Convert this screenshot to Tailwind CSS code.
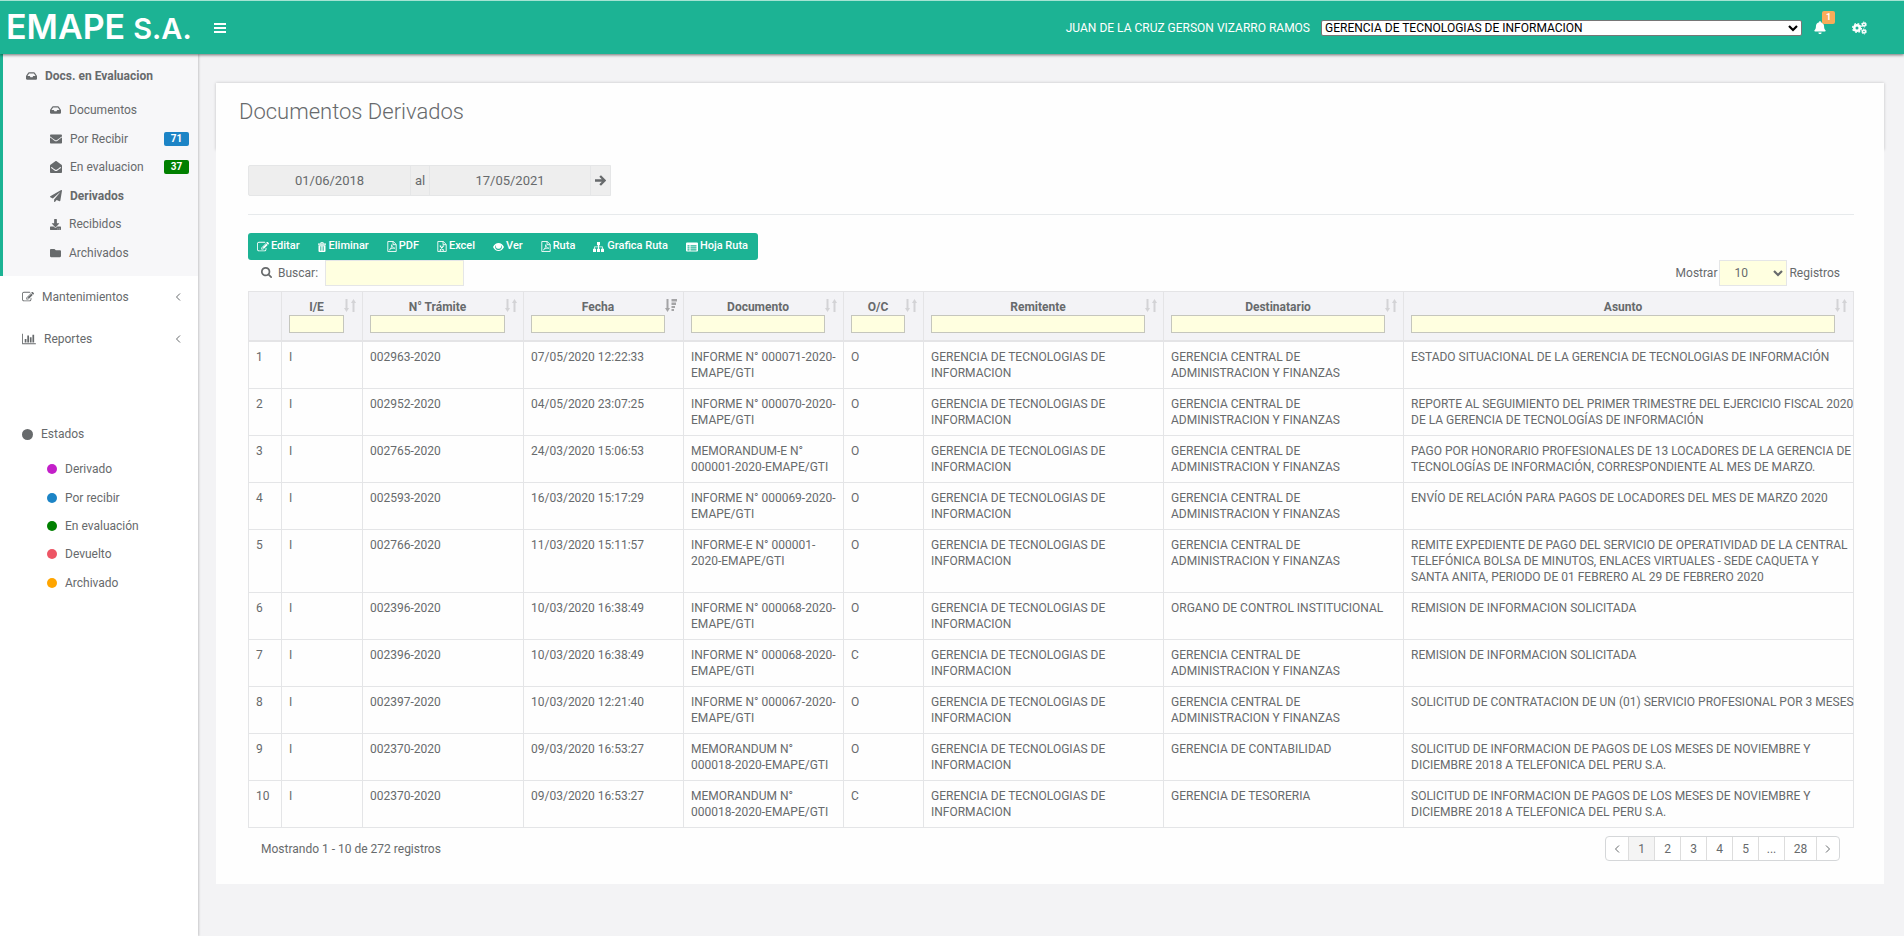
<!DOCTYPE html>
<html lang="es">
<head>
<meta charset="utf-8">
<title>EMAPE S.A. - Documentos Derivados</title>
<meta name="viewport" content="width=device-width, initial-scale=1">
<script src="https://cdn.jsdelivr.net/npm/@tailwindcss/browser@4"></script>
</head>
<body class="min-h-screen flex flex-col bg-[#f3f3f5] font-['Roboto','Liberation_Sans',sans-serif] text-xs text-[#676a6c]">

<svg class="hidden" aria-hidden="true">
  <symbol id="inbox" viewBox="0 0 576 512"><path d="M567.938 243.908L462.25 85.374A48.003 48.003 0 0 0 422.311 64H153.689a48 48 0 0 0-39.938 21.374L8.062 243.908A47.994 47.994 0 0 0 0 270.533V400c0 26.51 21.49 48 48 48h480c26.51 0 48-21.49 48-48V270.533a47.994 47.994 0 0 0-8.062-26.625zM162.252 128h251.497l85.333 128H376l-32 64H232l-32-64H76.918l85.334-128z"/></symbol>
  <symbol id="envelope" viewBox="0 0 512 512"><path d="M502.3 190.8c3.9-3.1 9.7-.2 9.7 4.7V400c0 26.5-21.5 48-48 48H48c-26.5 0-48-21.5-48-48V195.6c0-5 5.7-7.8 9.7-4.7 22.4 17.4 52.1 39.5 154.1 113.6 21.1 15.4 56.7 47.8 92.2 47.6 35.7.3 72-32.8 92.3-47.6 102-74.1 131.6-96.3 154-113.7zM256 320c23.2.4 56.6-29.2 73.4-41.4 132.7-96.3 142.8-104.7 173.4-128.7 5.8-4.5 9.2-11.5 9.2-18.9v-19c0-26.5-21.5-48-48-48H48c-26.5 0-48 21.5-48 48v19c0 7.4 3.4 14.3 9.2 18.9 30.6 23.9 40.7 32.4 173.4 128.7 16.8 12.2 50.2 41.8 73.4 41.4z"/></symbol>
  <symbol id="envelope-open" viewBox="0 0 512 512"><path fill-rule="evenodd" d="M512 464c0 26.5-21.5 48-48 48H48c-26.5 0-48-21.5-48-48V200.700a48 48 0 0 1 18.400-37.800c24.900-19.500 45.500-35.400 164.200-121.500C199.400 29.200 232.800-.3 256 0c23.200-.3 56.600 29.200 73.400 41.400 118.700 86.100 139.300 102 164.200 121.500A48 48 0 0 1 512 200.700V464zM446 252c-23 17-66 49-117 86-17 12-50 42-73 41-23 1-56-29-73-41-51-37-94-69-117-86l-26 38c23 17 73 54 123 90 20 15 57 48 93 48s72-33 93-48c50-36 100-73 123-90z"/></symbol>
  <symbol id="plane" viewBox="0 0 512 512"><path d="M476 3.200L12.500 270.600c-18.100 10.400-15.800 35.600 2.200 43.200L121 358.400l287.300-253.200c5.500-4.900 13.300 2.600 8.600 8.300L176 407v80.500c0 23.600 28.500 32.900 42.500 15.800L282 426l124.600 52.200c14.200 6 30.400-2.900 33-18.200l72-432C515 7.800 493.300-6.800 476 3.200z"/></symbol>
  <symbol id="download" viewBox="0 0 512 512"><path d="M216 0h80c13.300 0 24 10.700 24 24v168h87.700c17.800 0 26.700 21.500 14.100 34.100L269.700 378.300c-7.500 7.500-19.800 7.500-27.300 0L90.100 226.100c-12.600-12.600-3.700-34.100 14.100-34.100H192V24c0-13.300 10.700-24 24-24zm296 376v112c0 13.300-10.700 24-24 24H24c-13.300 0-24-10.700-24-24V376c0-13.300 10.700-24 24-24h146.700l49 49c20.100 20.100 52.500 20.100 72.600 0l49-49H488c13.300 0 24 10.700 24 24zm-124 88c0-11-9-20-20-20s-20 9-20 20 9 20 20 20 20-9 20-20zm64 0c0-11-9-20-20-20s-20 9-20 20 9 20 20 20 20-9 20-20z"/></symbol>
  <symbol id="folder" viewBox="0 0 512 512"><path d="M464 128H272l-64-64H48C21.490 64 0 85.490 0 112v288c0 26.510 21.490 48 48 48h416c26.510 0 48-21.490 48-48V176c0-26.510-21.490-48-48-48z"/></symbol>
  <symbol id="edit" viewBox="0 0 1792 1792"><path d="M888 1184l116-116-152-152-116 116v56h96v96h56zm440-720q-16-16-33 1l-350 350q-17 17-1 33t33-1l350-350q17-17 1-33zm80 594v190q0 119-84.500 203.500t-203.500 84.500h-832q-119 0-203.500-84.500t-84.500-203.500v-832q0-119 84.500-203.500t203.500-84.500h832q63 0 117 25 15 7 18 23 3 17-9 29l-49 49q-14 14-32 8-23-6-45-6h-832q-66 0-113 47t-47 113v832q0 66 47 113t113 47h832q66 0 113-47t47-113v-126q0-13 9-22l64-64q15-15 35-7t20 29zm-96-738l288 288-672 672h-288v-288zm444 132l-92 92-288-288 92-92q28-28 68-28t68 28l152 152q28 28 28 68t-28 68z"/></symbol>
  <symbol id="chart" viewBox="0 0 2048 1792"><path d="M640 896v512h-256v-512h256zm384-512v1024h-256v-1024h256zm1024 1152v128h-2048v-1536h128v1408h1920zm-640-896v768h-256v-768h256zm384-384v1152h-256v-1152h256z"/></symbol>
  <symbol id="search" viewBox="64 128 1664 1664"><path d="M1216 832q0-185-131.500-316.500t-316.500-131.500-316.500 131.500-131.500 316.500 131.500 316.500 316.500 131.500 316.500-131.500 131.500-316.500zm512 832q0 52-38 90t-90 38q-54 0-90-38l-343-342q-179 124-399 124-143 0-273.500-55.500t-225-150-150-225-55.500-273.500 55.500-273.500 150-225 225-150 273.500-55.500 273.500 55.500 225 150 150 225 55.500 273.500q0 220-124 399l343 343q37 37 37 90z"/></symbol>
  <symbol id="bell" viewBox="0 0 448 512"><path d="M224 512c35.320 0 63.970-28.650 63.970-64H160.030c0 35.350 28.650 64 63.970 64zm215.390-149.710c-19.320-20.760-55.470-51.990-55.470-154.290 0-77.700-54.480-139.900-127.940-155.160V32c0-17.670-14.320-32-31.980-32s-31.980 14.330-31.980 32v20.840C118.560 68.100 64.080 130.300 64.080 208c0 102.300-36.150 133.530-55.470 154.290-6 6.450-8.660 14.160-8.610 21.710.11 16.400 12.980 32 32.100 32h383.800c19.120 0 32-15.600 32.100-32 .05-7.550-2.610-15.270-8.610-21.710z"/></symbol>
  <symbol id="gears" viewBox="0 0 30 28"><g fill="none" stroke="currentColor"><circle cx="10" cy="14" r="5.500" stroke-width="5"/><circle cx="10" cy="14" r="8.800" stroke-width="2.600" stroke-dasharray="3.600 3.310"/><circle cx="24" cy="7" r="3" stroke-width="3"/><circle cx="24" cy="7" r="5" stroke-width="1.800" stroke-dasharray="2.600 2.636"/><circle cx="24" cy="21" r="3" stroke-width="3"/><circle cx="24" cy="21" r="5" stroke-width="1.800" stroke-dasharray="2.600 2.636"/></g></symbol>
  <symbol id="trash" viewBox="0 0 16 20"><path fill-rule="evenodd" d="M5 3V1.500Q5 0 6.500 0h3Q11 0 11 1.500V3h5v2.500H0V3zM6.500 1.500V3h3V1.500zM1 6.500h14V18q0 2-2 2H3q-2 0-2-2zM4 8.500v9h1.300v-9zm3.400 0v9h1.300v-9zm3.300 0v9H12v-9z"/></symbol>
  <symbol id="pdf" viewBox="0 0 18 21"><g fill="none" stroke="currentColor" stroke-width="1.700"><path d="M1 1h10.500L17 6.500V20H1zM11 1v6h6"/><path stroke-width="1.500" d="M4 17c3-2 5-6 4.500-10 0 4 2 6.500 6 6.800-4-.8-7.500.5-10.500 3.200z"/></g></symbol>
  <symbol id="excel" viewBox="0 0 18 21"><g fill="none" stroke="currentColor" stroke-width="1.700"><path d="M1 1h10.500L17 6.500V20H1zM11 1v6h6"/><path stroke-width="2" d="M5.500 9.500l6 8M11.500 9.500l-6 8M4.500 9.500h3M10 9.500h3M4.500 17.500h3M10 17.500h3"/></g></symbol>
  <symbol id="eye" viewBox="0 0 22 16"><path fill-rule="evenodd" d="M0 8Q4 0 11 0t11 8q-4 8-11 8T0 8zm6.500-4.500A5.800 5.800 0 0 0 11 13.800a5.800 5.800 0 0 0 4.500-10.300A5 5 0 0 1 11 11.500a5 5 0 0 1-4.500-8z"/></symbol>
  <symbol id="sitemap" viewBox="0 0 22 20"><path d="M8 0h6v6.500h-2V9h7.500v4.500H22V20h-6v-6.500h2v-3h-6v3h2V20H8v-6.500h2v-3H4v3h2V20H0v-6.500h2.500V9H10V6.500H8z"/></symbol>
  <symbol id="list" viewBox="0 0 24 20"><path fill-rule="evenodd" d="M2 1h20q2 0 2 2v14q0 2-2 2H2q-2 0-2-2V3q0-2 2-2zm1 5.500V9h4V6.500zm6 0V9h12V6.500zm-6 4V13h4v-2.500zm6 0V13h12v-2.500zm-6 4V17h4v-2.500zm6 0V17h12v-2.500z"/></symbol>
  <symbol id="sort" viewBox="0 0 12 13"><path d="M1.500 0h2v9H5l-2.500 4L0 9h1.500zM8.500 13h2V4H12L9.500 0 7 4h1.500z"/></symbol>
  <symbol id="sort-desc" viewBox="0 0 12 13"><path d="M1.500 0h2v9H5l-2.500 4L0 9h1.500zM6.500 0H12v2.500H6.500zM6.500 3.500H11V6H6.500zM6.500 7H10v2H6.500zM6.500 10H9v2H6.500z"/></symbol>
  <symbol id="arrow" viewBox="0 0 16 16"><path fill="none" stroke="currentColor" stroke-width="3.400" d="M0 8h14M7.500 1.500L14 8l-6.500 6.500"/></symbol>
  <symbol id="bars" viewBox="0 0 12 10"><path d="M0 0h12v2H0zM0 4h12v2H0zM0 8h12v2H0z"/></symbol>
  <symbol id="chev-down" viewBox="0 0 10 7"><path fill="none" stroke="currentColor" stroke-width="2.200" d="M1 1l4 4 4-4"/></symbol>
  <symbol id="left" viewBox="0 0 6 8"><path fill="none" stroke="currentColor" d="M5 .5L1.500 4 5 7.500"/></symbol>
  <symbol id="right" viewBox="0 0 6 8"><path fill="none" stroke="currentColor" d="M1 .5L4.500 4 1 7.500"/></symbol>
</svg>

<header class="relative z-10 flex h-[54px] items-center border-t border-[#a5e3d3] bg-[#1cb394] text-white shadow-[0_1px_3px_rgba(0,0,0,0.55)]">
  <a href="#" class="flex w-[198px] items-baseline gap-2 pl-1.5 font-['Inter',sans-serif] font-semibold leading-[44px]"><span class="text-[34px]">EMAPE</span><span class="text-[29px]">S.A.</span></a>
  <button type="button" aria-label="Menú" class="ml-4"><svg class="h-2.5 w-3 fill-current"><use href="#bars"/></svg></button>
  <div class="ml-auto flex items-center pr-[37px]">
    <label for="area">JUAN DE LA CRUZ GERSON VIZARRO RAMOS</label>
    <div class="relative ml-[11px] text-black">
      <select id="area" class="block h-4 w-[481px] appearance-none rounded-xs border border-[#767676] bg-white pl-[3px] text-xs leading-[14px]"><option>GERENCIA DE TECNOLOGIAS DE INFORMACION</option></select>
      <svg class="pointer-events-none absolute right-1 top-[5px] h-[7px] w-2.5"><use href="#chev-down"/></svg>
    </div>
    <button type="button" aria-label="Notificaciones" class="relative ml-3"><svg class="h-[13px] w-3 fill-current"><use href="#bell"/></svg><span class="absolute -top-2.5 left-2 h-[13px] w-[13px] rounded-xs bg-[#f8ac59] text-center text-[9px] font-bold leading-[13px]">1</span></button>
    <button type="button" aria-label="Configuración" class="ml-[26px]"><svg class="h-[14px] w-[15px] fill-current"><use href="#gears"/></svg></button>
  </div>
</header>

<div class="flex grow">
  <nav class="w-[198px] shrink-0 bg-white shadow-[1px_0_2px_rgba(0,0,0,0.18)]">
    <div class="h-[222px] border-l-[3px] border-[#1cb394] bg-[#f7f7f9] pt-3">
      <a href="#" class="flex h-5 items-center gap-2 pl-[23px] font-bold"><svg class="h-2.5 w-[11px] fill-current"><use href="#inbox"/></svg>Docs. en Evaluacion</a>
      <ul class="mt-2.5 grid h-[171px] grid-rows-6 pl-[47px] pr-[9px]">
        <li class="flex items-center"><a href="#" class="flex items-center gap-2"><svg class="h-2.5 w-[11px] fill-current"><use href="#inbox"/></svg>Documentos</a></li>
        <li class="flex items-center justify-between"><a href="#" class="flex items-center gap-2"><svg class="h-3 w-3 fill-current"><use href="#envelope"/></svg>Por Recibir</a><span class="h-[14px] w-[25px] rounded-xs bg-[#1c84c6] text-center text-[10px] font-bold leading-[14px] text-white">71</span></li>
        <li class="flex items-center justify-between"><a href="#" class="flex items-center gap-2"><svg class="h-3 w-3 fill-current"><use href="#envelope-open"/></svg>En evaluacion</a><span class="h-[14px] w-[25px] rounded-xs bg-[#008000] text-center text-[10px] font-bold leading-[14px] text-white">37</span></li>
        <li class="flex items-center"><a href="#" class="flex items-center gap-2 font-bold"><svg class="h-3 w-3 fill-current"><use href="#plane"/></svg>Derivados</a></li>
        <li class="flex items-center"><a href="#" class="flex items-center gap-2"><svg class="h-[11px] w-[11px] fill-current"><use href="#download"/></svg>Recibidos</a></li>
        <li class="flex items-center"><a href="#" class="flex items-center gap-2"><svg class="h-3 w-[11px] fill-current"><use href="#folder"/></svg>Archivados</a></li>
      </ul>
    </div>
    <a href="#" class="flex h-[42px] items-center pl-[22px] pr-[17px]"><svg class="mr-2 h-3 w-3 fill-current"><use href="#edit"/></svg>Mantenimientos<svg class="ml-auto h-2 w-1.5"><use href="#left"/></svg></a>
    <a href="#" class="flex h-[42px] items-center pl-[22px] pr-[17px]"><svg class="mr-2 h-3 w-[14px] fill-current"><use href="#chart"/></svg>Reportes<svg class="ml-auto h-2 w-1.5"><use href="#left"/></svg></a>
    <h2 class="mt-16 flex h-5 items-center gap-2 pl-[22px]"><span class="size-[11px] rounded-full bg-[#676a6c]"></span>Estados</h2>
    <ul class="mt-[11px] grid h-[142px] grid-rows-5 pl-[47px]">
      <li class="flex items-center gap-2"><span class="size-2.5 rounded-full bg-[#c31fc9]"></span>Derivado</li>
      <li class="flex items-center gap-2"><span class="size-2.5 rounded-full bg-[#1c84c6]"></span>Por recibir</li>
      <li class="flex items-center gap-2"><span class="size-2.5 rounded-full bg-[#008000]"></span>En evaluación</li>
      <li class="flex items-center gap-2"><span class="size-2.5 rounded-full bg-[#ed5565]"></span>Devuelto</li>
      <li class="flex items-center gap-2"><span class="size-2.5 rounded-full bg-[#ffa500]"></span>Archivado</li>
    </ul>
  </nav>

  <main class="min-w-0 grow pb-[52px] pl-[18px] pr-5 pt-[29px]">
    <div class="bg-[#fefefe]">
      <div class="h-[67px] px-[23px] pt-[15px] shadow-[0_0_3px_rgba(0,0,0,0.2)]">
        <h1 class="text-[22px] font-light leading-7">Documentos Derivados</h1>
      </div>
      <div class="relative bg-[#fefefe] pb-[22px] pl-8 pr-[30px] pt-[15px]">
        <form class="flex h-[31px] w-[363px] items-stretch rounded-l-xs border border-[#e5e6e7] bg-[#eeeeee] text-[13px]">
          <input aria-label="Desde" class="w-[161px] min-w-0 text-center" value="01/06/2018">
          <span class="flex w-5 items-center justify-center border-x border-[#e5e6e7]">al</span>
          <input aria-label="Hasta" class="w-40 min-w-0 text-center" value="17/05/2021">
          <button type="button" aria-label="Consultar" class="flex grow items-center justify-center border-l border-[#e5e6e7]"><svg class="size-[11px]"><use href="#arrow"/></svg></button>
        </form>
        <hr class="mb-[18px] mt-[18px] border-[#e7eaec]">
        <div class="flex h-[27px] w-[510px] items-center justify-between rounded-[3px] bg-[#1cb394] pl-[9px] pr-2.5 text-[11px] font-medium text-white">
          <button type="button" class="flex items-center gap-0.5"><svg class="h-3 w-3 fill-current"><use href="#edit"/></svg>Editar</button>
          <button type="button" class="flex items-center gap-[3px]"><svg class="h-2.5 w-2 fill-current"><use href="#trash"/></svg>Eliminar</button>
          <button type="button" class="flex items-center gap-0.5"><svg class="h-[11px] w-2.5"><use href="#pdf"/></svg>PDF</button>
          <button type="button" class="flex items-center gap-0.5"><svg class="h-[11px] w-2.5"><use href="#excel"/></svg>Excel</button>
          <button type="button" class="flex items-center gap-0.5"><svg class="h-2 w-[11px] fill-current"><use href="#eye"/></svg>Ver</button>
          <button type="button" class="flex items-center gap-0.5"><svg class="h-[11px] w-2.5"><use href="#pdf"/></svg>Ruta</button>
          <button type="button" class="flex items-center gap-[3px]"><svg class="h-2.5 w-[11px] fill-current"><use href="#sitemap"/></svg>Grafica Ruta</button>
          <button type="button" class="flex items-center gap-0.5"><svg class="h-2.5 w-3 fill-current"><use href="#list"/></svg>Hoja Ruta</button>
        </div>
        <div class="flex h-[31px] items-start pl-[13px] pr-3.5">
          <label for="buscar" class="flex h-[25px] items-center gap-1.5"><svg class="h-[11px] w-[11px] fill-current"><use href="#search"/></svg>Buscar:</label>
          <input id="buscar" class="ml-[7px] h-[26px] w-[139px] border border-[#e5e6e7] bg-[#ffffe0] px-2">
          <div class="ml-auto flex items-center gap-0.5">
            <label for="mostrar">Mostrar</label>
            <div class="relative">
              <select id="mostrar" class="block h-[26px] w-[68px] appearance-none border border-[#e5e6e7] bg-[#ffffe0] pl-3.5"><option>10</option></select>
              <svg class="pointer-events-none absolute right-1 top-2.5 h-[7px] w-2.5"><use href="#chev-down"/></svg>
            </div>
            <span>Registros</span>
          </div>
        </div>
        <table class="w-full table-fixed border-collapse">
          <colgroup><col class="w-[33px]"><col class="w-[81px]"><col class="w-[161px]"><col class="w-40"><col class="w-[160px]"><col class="w-20"><col class="w-60"><col class="w-60"><col></colgroup>
          <thead class="bg-[#f3f3f6]"><tr id="cabecera" class="border-b-2 border-[#dddddf]"><th class="border border-b-2 border-[#e4e4e6]"></th></tr></thead>
          <tbody id="filas"></tbody>
        </table>
        <div class="mt-2 flex items-start justify-between pl-[13px] pr-3.5">
          <p class="leading-[26px]">Mostrando 1 - 10 de 272 registros</p>
          <div class="flex h-[25px] divide-x divide-[#dddddd] rounded-[4px] border border-[#d5d7d9] bg-white">
            <button type="button" aria-label="Anterior" class="flex w-[23px] items-center justify-center"><svg class="h-2 w-1.5"><use href="#left"/></svg></button>
            <button type="button" class="w-[26px] bg-[#f4f4f4]">1</button>
            <button type="button" class="w-[26px]">2</button>
            <button type="button" class="w-[26px]">3</button>
            <button type="button" class="w-[26px]">4</button>
            <button type="button" class="w-[26px]">5</button>
            <button type="button" class="w-[26px]">...</button>
            <button type="button" class="w-8">28</button>
            <button type="button" aria-label="Siguiente" class="flex w-[22px] items-center justify-center"><svg class="h-2 w-1.5"><use href="#right"/></svg></button>
          </div>
        </div>
      </div>
    </div>
  </main>
</div>

<script>
const columnas = ["I/E", "N° Trámite", "Fecha", "Documento", "O/C", "Remitente", "Destinatario", "Asunto"];
document.getElementById("cabecera").insertAdjacentHTML("beforeend", columnas.map(c => `
  <th class="relative border border-b-2 border-[#e4e4e6] pb-[7px] pl-[7px] pr-[18px] pt-[7px] align-top font-bold">
    <div class="leading-4">${c}</div>
    <svg class="${c === "Fecha" ? "absolute right-1.5 top-[7px] h-[13px] w-3 fill-[#a4a4a6]" : "absolute right-1.5 top-[7px] h-[13px] w-3 fill-[#d3d3d6]"}"><use href="${c === "Fecha" ? "#sort-desc" : "#sort"}"/></svg>
    <input aria-label="Filtrar ${c}" class="block h-[18px] w-full border border-[#c5c6bd] bg-[#ffffe0]">
  </th>`).join(""));

const GTI = "GERENCIA DE TECNOLOGIAS DE INFORMACION";
const GCAF = "GERENCIA CENTRAL DE ADMINISTRACION Y FINANZAS";
const datos = [
  ["002963-2020", "07/05/2020 12:22:33", "INFORME N° 000071-2020-EMAPE/GTI", "O", GCAF, "ESTADO SITUACIONAL DE LA GERENCIA DE TECNOLOGIAS DE INFORMACIÓN"],
  ["002952-2020", "04/05/2020 23:07:25", "INFORME N° 000070-2020-EMAPE/GTI", "O", GCAF, "REPORTE AL SEGUIMIENTO DEL PRIMER TRIMESTRE DEL EJERCICIO FISCAL 2020<br>DE LA GERENCIA DE TECNOLOGÍAS DE INFORMACIÓN"],
  ["002765-2020", "24/03/2020 15:06:53", "MEMORANDUM-E N° 000001-2020-EMAPE/GTI", "O", GCAF, "PAGO POR HONORARIO PROFESIONALES DE 13 LOCADORES DE LA GERENCIA DE<br>TECNOLOGÍAS DE INFORMACIÓN, CORRESPONDIENTE AL MES DE MARZO."],
  ["002593-2020", "16/03/2020 15:17:29", "INFORME N° 000069-2020-EMAPE/GTI", "O", GCAF, "ENVÍO DE RELACIÓN PARA PAGOS DE LOCADORES DEL MES DE MARZO 2020"],
  ["002766-2020", "11/03/2020 15:11:57", "INFORME-E N° 000001-2020-EMAPE/GTI", "O", GCAF, "REMITE EXPEDIENTE DE PAGO DEL SERVICIO DE OPERATIVIDAD DE LA CENTRAL<br>TELEFÓNICA BOLSA DE MINUTOS, ENLACES VIRTUALES - SEDE CAQUETA Y<br>SANTA ANITA, PERIODO DE 01 FEBRERO AL 29 DE FEBRERO 2020"],
  ["002396-2020", "10/03/2020 16:38:49", "INFORME N° 000068-2020-EMAPE/GTI", "O", "ORGANO DE CONTROL INSTITUCIONAL", "REMISION DE INFORMACION SOLICITADA"],
  ["002396-2020", "10/03/2020 16:38:49", "INFORME N° 000068-2020-EMAPE/GTI", "C", GCAF, "REMISION DE INFORMACION SOLICITADA"],
  ["002397-2020", "10/03/2020 12:21:40", "INFORME N° 000067-2020-EMAPE/GTI", "O", GCAF, "SOLICITUD DE CONTRATACION DE UN (01) SERVICIO PROFESIONAL POR 3 MESES"],
  ["002370-2020", "09/03/2020 16:53:27", "MEMORANDUM N° 000018-2020-EMAPE/GTI", "O", "GERENCIA DE CONTABILIDAD", "SOLICITUD DE INFORMACION DE PAGOS DE LOS MESES DE NOVIEMBRE Y<br>DICIEMBRE 2018 A TELEFONICA DEL PERU S.A."],
  ["002370-2020", "09/03/2020 16:53:27", "MEMORANDUM N° 000018-2020-EMAPE/GTI", "C", "GERENCIA DE TESORERIA", "SOLICITUD DE INFORMACION DE PAGOS DE LOS MESES DE NOVIEMBRE Y<br>DICIEMBRE 2018 A TELEFONICA DEL PERU S.A."]
];
document.getElementById("filas").innerHTML = datos.map((d, i) => {
  const celdas = [i + 1, "I", d[0], d[1], d[2], d[3], GTI, d[4]];
  return `<tr>${celdas.map(t => `<td class="border border-[#e4e5e7] px-[7px] py-[7px] align-top leading-4">${t}</td>`).join("")}
    <td class="whitespace-nowrap border border-[#e4e5e7] py-[7px] pl-[7px] align-top leading-4">${d[5]}</td></tr>`;
}).join("");
</script>
</body>
</html>
